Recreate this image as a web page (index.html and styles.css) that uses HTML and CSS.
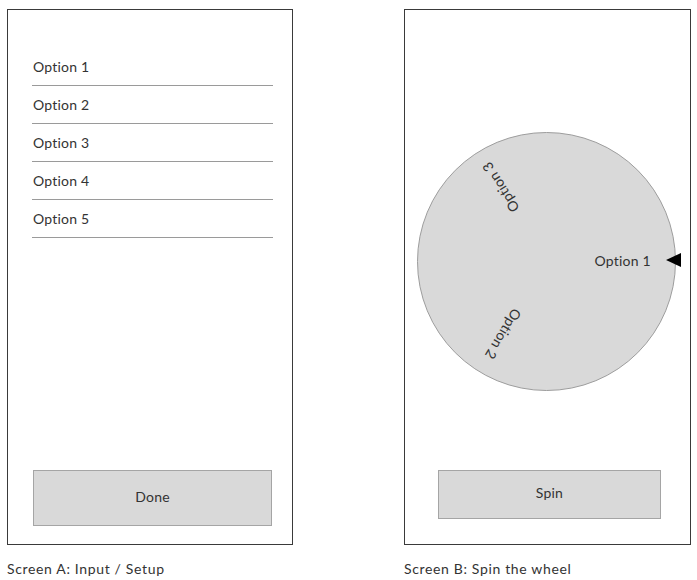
FILE: index.html
```html
<!DOCTYPE html>
<html lang="en">
<head>
    <meta charset="UTF-8">
    <meta name="viewport" content="width=device-width, initial-scale=1.0">
    <title>Spin the Wheel - Wireframes</title>
    <link rel="stylesheet" href="styles.css">
</head>
<body>
    <div class="screens">
        <!-- Screen A -->
        <div class="screen-col">
            <div class="phone phone-a">
                <ul class="option-list">
                    <li>Option 1</li>
                    <li>Option 2</li>
                    <li>Option 3</li>
                    <li>Option 4</li>
                    <li>Option 5</li>
                </ul>
                <button class="wire-btn done-btn">Done</button>
            </div>
            <p class="caption">Screen A: Input / Setup</p>
        </div>

        <!-- Screen B -->
        <div class="screen-col">
            <div class="phone phone-b">
                <div class="wheel">
                    <span class="slice-label label-1">Option 1</span>
                    <span class="slice-label label-2">Option 2</span>
                    <span class="slice-label label-3">Option 3</span>
                    <span class="pointer"></span>
                </div>
                <button class="wire-btn spin-btn">Spin</button>
            </div>
            <p class="caption">Screen B: Spin the wheel</p>
        </div>
    </div>
</body>
</html>
```

FILE: styles.css
```css
:root {
    --ink: #333;
    --frame: #3a3a3a;
    --fill: #d9d9d9;
    --rule: #9a9a9a;
}

body {
    margin: 0;
    padding: 9px 0 0 7px;
    font-family: Lato, 'Noto Sans', sans-serif;
    color: var(--ink);
    background: #fff;
}

.screens {
    display: flex;
    gap: 111px;
}

.screen-col {
    width: 286px;
}

/* Phone frames */
.phone {
    box-sizing: border-box;
    height: 536px;
    border: 1px solid var(--frame);
    display: flex;
    flex-direction: column;
}

.phone-a {
    padding: 38px 19px 18px 24px;
}

.phone-b {
    width: 287px;
    padding: 122px 0 25px 0;
    align-items: center;
}

/* Option list */
.option-list {
    list-style: none;
    margin: 0;
    padding: 0;
}

.option-list li {
    height: 37px;
    line-height: 37px;
    font-size: 14px;
    letter-spacing: 0.2px;
    padding-left: 1px;
    border-bottom: 1px solid var(--rule);
}

/* Buttons */
.wire-btn {
    margin-top: auto;
    background: var(--fill);
    border: 1px solid #a5a5a5;
    font-family: inherit;
    font-size: 14px;
    letter-spacing: 0.2px;
    color: var(--ink);
    padding: 0 0 4px;
}

.done-btn {
    width: 239px;
    height: 56px;
    margin-left: 1px;
}

.spin-btn {
    width: 223px;
    height: 49px;
    margin-left: 4px;
}

/* Wheel */
.wheel {
    position: relative;
    box-sizing: border-box;
    width: 259px;
    height: 259px;
    margin-left: -2px;
    border-radius: 50%;
    background: var(--fill);
    border: 1px solid #9d9d9d;
}

.slice-label {
    position: absolute;
    left: 50%;
    top: 50%;
    height: 16px;
    margin-top: -9px;
    line-height: 16px;
    font-size: 14px;
    letter-spacing: 0.2px;
    white-space: nowrap;
    transform-origin: 0 50%;
}

.label-1 { transform: rotate(0deg) translateX(48px); }
.label-2 { transform: rotate(121deg) translateX(57px); }
.label-3 { transform: rotate(-122deg) translateX(59px); }

.pointer {
    position: absolute;
    left: 248px;
    top: 120px;
    width: 0;
    height: 0;
    border-top: 7px solid transparent;
    border-bottom: 7px solid transparent;
    border-right: 15px solid #000;
}

/* Captions */
.caption {
    margin: 15px 0 0;
    font-size: 14px;
    letter-spacing: 0.65px;
}
```
